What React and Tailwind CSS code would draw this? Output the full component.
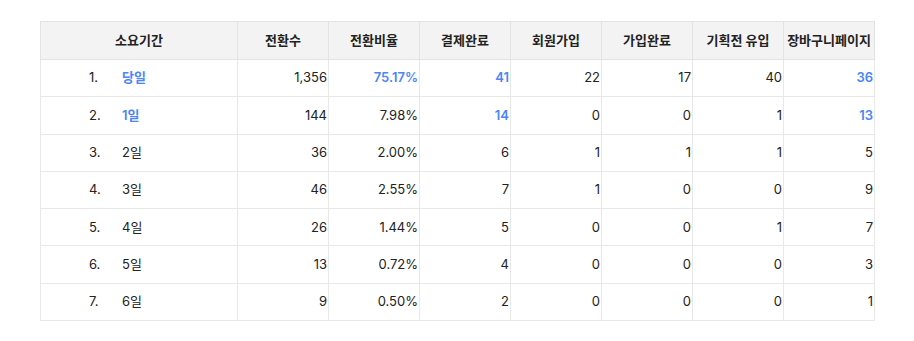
const headers = ["전환수", "전환비율", "결제완료", "회원가입", "가입완료", "기획전 유입", "장바구니페이지"];

const rows = [
  { no: "1.", label: "당일", hl: true, vals: ["1,356", "75.17%", "41", "22", "17", "40", "36"], blue: [false, true, true, false, false, false, true] },
  { no: "2.", label: "1일", hl: true, vals: ["144", "7.98%", "14", "0", "0", "1", "13"], blue: [false, false, true, false, false, false, true] },
  { no: "3.", label: "2일", vals: ["36", "2.00%", "6", "1", "1", "1", "5"] },
  { no: "4.", label: "3일", vals: ["46", "2.55%", "7", "1", "0", "0", "9"] },
  { no: "5.", label: "4일", vals: ["26", "1.44%", "5", "0", "0", "1", "7"] },
  { no: "6.", label: "5일", vals: ["13", "0.72%", "4", "0", "0", "0", "3"] },
  { no: "7.", label: "6일", vals: ["9", "0.50%", "2", "0", "0", "0", "1"] },
];

export default function App() {
  return (
    <div
      className="w-[914px] h-[341px] bg-white pt-[21px] pl-[40px] text-[13px] text-[#222]"
      style={{ fontFamily: 'Inter, "Noto Sans CJK KR", sans-serif' }}
    >
      <table className="border-collapse table-fixed w-[834px]">
        <colgroup>
          <col className="w-[197px]" />
          {headers.map((h) => (
            <col key={h} className="w-[91px]" />
          ))}
        </colgroup>
        <thead>
          <tr className="h-[38px] bg-[#f3f3f3]">
            <th className="border border-[#e3e3e3] font-bold text-center">소요기간</th>
            {headers.map((h) => (
              <th key={h} className="border border-[#e3e3e3] font-bold text-center whitespace-nowrap">
                {h}
              </th>
            ))}
          </tr>
        </thead>
        <tbody>
          {rows.map((r) => (
            <tr key={r.no} className="h-[37.3px]">
              <td className="border border-[#e8e8e8]">
                <div className="flex items-center">
                  <span className="w-[81px] pl-[48px]">{r.no}</span>
                  <span className={r.hl ? "text-[#4a86f7] font-semibold" : ""}>{r.label}</span>
                </div>
              </td>
              {r.vals.map((v, i) => (
                <td
                  key={i}
                  className={
                    "border border-[#e8e8e8] text-right pr-[1px] " +
                    (r.blue && r.blue[i] ? "text-[#4a86f7] font-semibold" : "")
                  }
                >
                  {v}
                </td>
              ))}
            </tr>
          ))}
        </tbody>
      </table>
    </div>
  );
}
